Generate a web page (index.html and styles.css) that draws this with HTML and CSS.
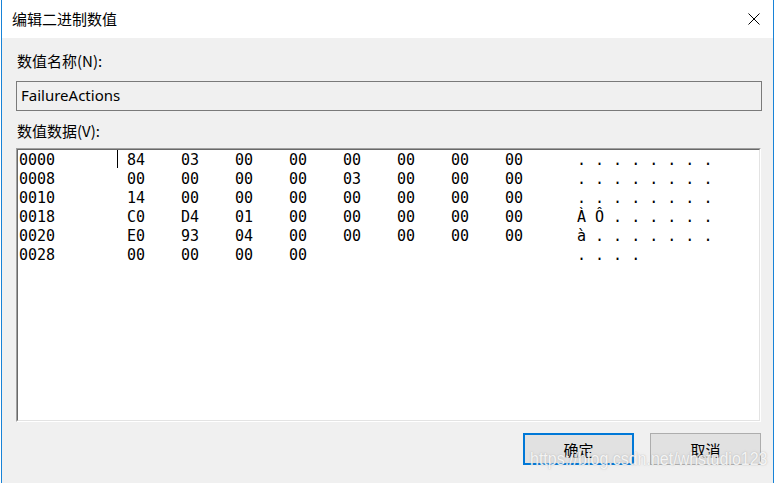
FILE: index.html
```html
<!DOCTYPE html>
<html lang="zh-CN">
<head>
<meta charset="utf-8">
<title>编辑二进制数值</title>
<link rel="stylesheet" href="styles.css">
</head>
<body>
<div class="window">
  <div class="titlebar">
    <span class="title">编辑二进制数值</span>
    <span class="close">
      <svg width="12" height="12" viewBox="0 0 12 12"><path d="M0.5 0.5 L11.5 11.5 M11.5 0.5 L0.5 11.5" stroke="#000" stroke-width="1" fill="none"/></svg>
    </span>
  </div>
  <div class="client">
    <div class="label">数值名称(N):</div>
    <div class="namebox">FailureActions</div>
    <div class="label label2">数值数据(V):</div>
    <div class="databox">
      <div class="datainner">
        <div class="row"><span class="off">0000</span><span class="caret"></span><span class="hx">84</span><span class="hx">03</span><span class="hx">00</span><span class="hx">00</span><span class="hx">00</span><span class="hx">00</span><span class="hx">00</span><span class="hx">00</span><span class="asc">. . . . . . . .</span></div>
        <div class="row"><span class="off">0008</span><span class="hx">00</span><span class="hx">00</span><span class="hx">00</span><span class="hx">00</span><span class="hx">03</span><span class="hx">00</span><span class="hx">00</span><span class="hx">00</span><span class="asc">. . . . . . . .</span></div>
        <div class="row"><span class="off">0010</span><span class="hx">14</span><span class="hx">00</span><span class="hx">00</span><span class="hx">00</span><span class="hx">00</span><span class="hx">00</span><span class="hx">00</span><span class="hx">00</span><span class="asc">. . . . . . . .</span></div>
        <div class="row"><span class="off">0018</span><span class="hx">C0</span><span class="hx">D4</span><span class="hx">01</span><span class="hx">00</span><span class="hx">00</span><span class="hx">00</span><span class="hx">00</span><span class="hx">00</span><span class="asc">À Ô . . . . . .</span></div>
        <div class="row"><span class="off">0020</span><span class="hx">E0</span><span class="hx">93</span><span class="hx">04</span><span class="hx">00</span><span class="hx">00</span><span class="hx">00</span><span class="hx">00</span><span class="hx">00</span><span class="asc">à . . . . . . .</span></div>
        <div class="row"><span class="off">0028</span><span class="hx">00</span><span class="hx">00</span><span class="hx">00</span><span class="hx">00</span><span class="hx"></span><span class="hx"></span><span class="hx"></span><span class="hx"></span><span class="asc">. . . .</span></div>
      </div>
    </div>
    <div class="buttons">
      <button class="btn btn-default">确定</button>
      <button class="btn">取消</button>
    </div>
  </div>
</div>
<div class="watermark">https://blog.csdn.net/whstudio123</div>
</body>
</html>
```

FILE: styles.css
```css
html, body {
  margin: 0;
  padding: 0;
}
body {
  position: relative;
  width: 777px;
  height: 483px;
  overflow: hidden;
  background: #ffffff;
  font-family: "Noto Sans", "Noto Sans CJK SC", sans-serif;
  font-size: 15px;
  color: #000;
}
.window {
  margin-left: 1px;
  width: 771px;
  height: 483px;
  border-left: 1px solid #1883d7;
  border-right: 1px solid #1883d7;
  background: #f0f0f0;
  display: flex;
  flex-direction: column;
  overflow: hidden;
}
.titlebar {
  height: 38px;
  background: #ffffff;
  display: flex;
  align-items: center;
  justify-content: space-between;
  padding-left: 10px;
  padding-right: 13px;
}
.title {
  font-family: "Noto Sans CJK SC", sans-serif;
  font-size: 15px;
  line-height: 20px;
  margin-top: -1px;
}
.close {
  display: flex;
  width: 12px;
  height: 12px;
}
.client {
  display: flex;
  flex-direction: column;
  padding: 13px 11px 0 14px;
}
.label {
  font-family: "Noto Sans CJK SC", sans-serif;
  line-height: 20px;
  height: 20px;
  margin-left: 1px;
}
.namebox {
  margin-top: 10px;
  height: 28px;
  border: 1px solid #7a7a7a;
  background: #f0f0f0;
  line-height: 26px;
  padding-left: 4px;
}
.label2 {
  margin-top: 10px;
}
.databox {
  margin-top: 7px;
  height: 272px;
  width: 743px;
  border-top: 1px solid #a0a0a0;
  border-left: 1px solid #a0a0a0;
  border-right: 1px solid #ffffff;
  border-bottom: 1px solid #ffffff;
}
.datainner {
  box-sizing: border-box;
  height: 272px;
  border-top: 1px solid #696969;
  border-left: 1px solid #696969;
  border-right: 1px solid #e3e3e3;
  border-bottom: 1px solid #e3e3e3;
  background: #ffffff;
  padding-top: 1px;
  padding-left: 1px;
  font-family: "DejaVu Sans Mono", monospace;
  font-size: 15px;
}
.row {
  display: flex;
  height: 19px;
  line-height: 19px;
  white-space: pre;
}
.off {
  width: 108px;
}
.caret {
  position: relative;
  width: 0;
}
.caret::before {
  content: "";
  position: absolute;
  left: -10px;
  top: -1px;
  width: 1px;
  height: 18px;
  background: #000;
}
.hx {
  width: 54px;
}
.asc {
  margin-left: 18px;
}
.buttons {
  display: flex;
  justify-content: flex-end;
  gap: 16px;
  margin-top: 11px;
  padding-right: 1px;
}
.btn {
  width: 111px;
  height: 32px;
  background: #e1e1e1;
  border: 1px solid #adadad;
  font-family: "Noto Sans CJK SC", sans-serif;
  font-size: 15px;
  color: #000;
  padding: 0;
  margin: 0;
}
.btn-default {
  border: 2px solid #0078d7;
}
.watermark {
  position: absolute;
  left: 530px;
  top: 447px;
  font-family: "Liberation Sans", sans-serif;
  font-size: 16px;
  line-height: 20px;
  transform: scaleY(1.2);
  transform-origin: left top;
  color: rgba(255, 255, 255, 0.85);
  text-shadow: 0 0 1px rgba(150, 150, 150, 0.5), 0 0 2px rgba(170, 170, 170, 0.35);
  white-space: nowrap;
}
```
